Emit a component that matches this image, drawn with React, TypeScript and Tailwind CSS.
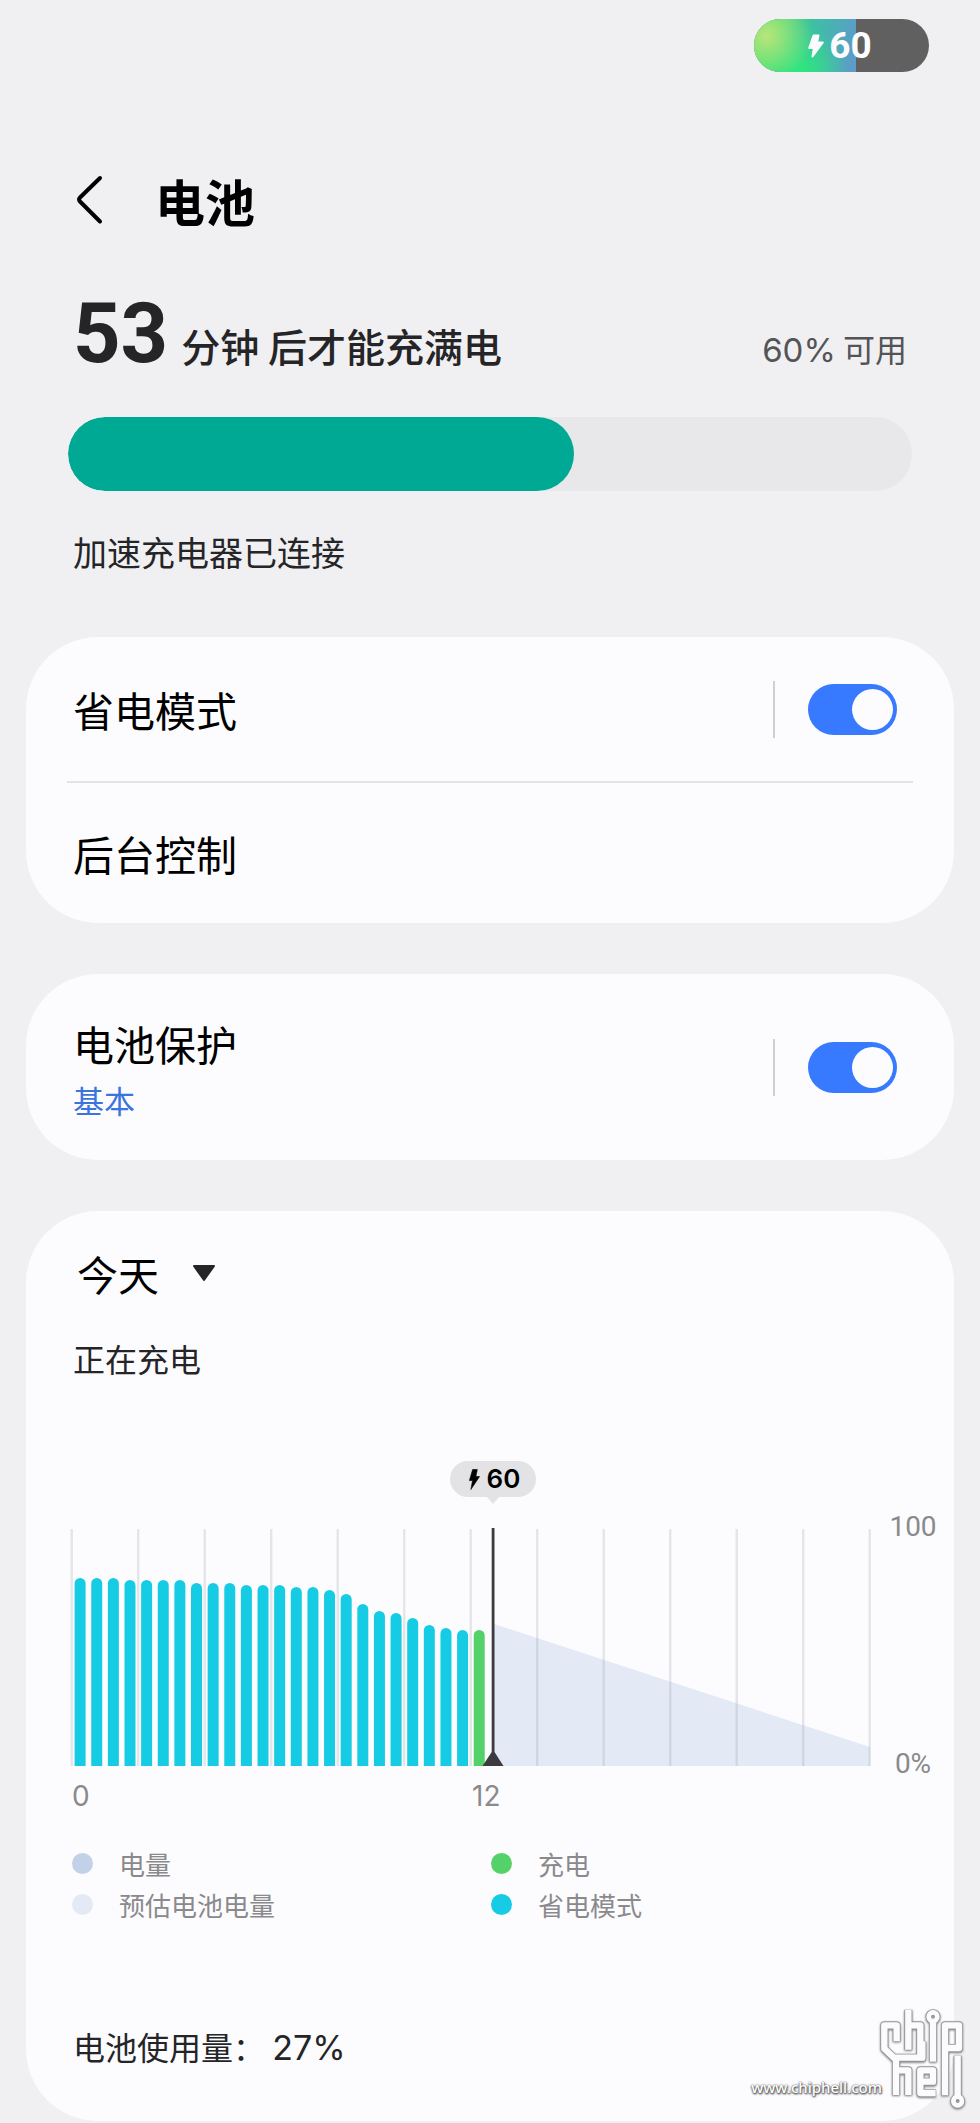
import { useState } from "react";

const cjk = "font-['Noto_Sans_CJK_SC',sans-serif]";
const latin = "font-['Inter',sans-serif]";

const barTops = [
  50, 50, 50, 52, 52, 52, 52, 55, 55, 55, 57, 57, 57, 59, 59, 62, 66, 76, 83,
  85, 90, 97, 100, 102, 102,
];

const legend = [
  { label: "电量", dot: "bg-[#c3d1e8]" },
  { label: "充电", dot: "bg-[#54d169]" },
  { label: "预估电池电量", dot: "bg-[#e3eaf5]" },
  { label: "省电模式", dot: "bg-[#16cce5]" },
];

function RoundBolt({ className }: { className: string }) {
  return (
    <svg viewBox="0 0 16 24" className={className} fill="currentColor" stroke="currentColor" strokeWidth="2" strokeLinejoin="round" aria-hidden="true">
      <path d="M5.500 1.500H10.500L9 8.500H14.800L4.500 22.500 6 14H1.200Z" />
    </svg>
  );
}

function SharpBolt({ className }: { className: string }) {
  return (
    <svg viewBox="0 0 11 21" className={className} fill="currentColor" stroke="currentColor" strokeWidth="0.6" strokeLinejoin="round" aria-hidden="true">
      <path d="M3.600 0.500H8.300L6.900 7.500H10.600L1.900 20.500 3.500 11.500H0.400Z" />
    </svg>
  );
}

function Toggle({ id, label }: { id: string; label: string }) {
  const [on, setOn] = useState(true);
  return (
    <div className="flex items-center gap-[33px]">
      <span className="h-[57px] w-[2px] bg-[#cfcfd2]" />
      <label htmlFor={id} className="relative block h-[51px] w-[89px] cursor-pointer">
        <input
          id={id}
          type="checkbox"
          role="switch"
          aria-label={label}
          checked={on}
          onChange={(e) => setOn(e.target.checked)}
          className="peer block h-full w-full appearance-none rounded-full bg-[#b9b9be] checked:bg-[#387aff]"
        />
        <span className="pointer-events-none absolute top-[5px] left-[5px] size-[41px] rounded-full bg-[#fcfcfe] peer-checked:left-[44px]" />
      </label>
    </div>
  );
}

function Chart() {
  return (
    <svg viewBox="0 0 802 239" className="block h-auto w-full" role="img" aria-label="电池电量图表">
      <path d="M424 96 800 219V238H424Z" fill="#e3eaf5" />
      {Array.from({ length: 13 }, (_, i) => (
        <rect key={i} x={0.5 + i * 66.5} y="1" width="2.4" height="237" fill="#8c8c96" fillOpacity="0.2" />
      ))}
      {barTops.map((top, i) => {
        const x = 4.6 + i * 16.63;
        return (
          <path
            key={i}
            d={`M${x} 238V${top + 5.5}a5.5 5.5 0 0 1 11 0V238Z`}
            fill={i === barTops.length - 1 ? "#54d169" : "#16cce5"}
          />
        );
      })}
      <path d="M421.7 0h2.8v224l9 14h-21l9.2-14Z" fill="#3c3c3e" />
    </svg>
  );
}

function Watermark() {
  return (
    <div className="pointer-events-none absolute right-[13px] bottom-[12px] flex items-end">
      <span className="-mr-[3px] mb-[13px] font-['Noto_Sans',sans-serif] text-[15px] leading-[22px] font-medium text-white [text-shadow:0_0_2px_#555,0_1px_2px_#555,1px_1px_2px_#666]">
        www.chiphell.com
      </span>
      <svg viewBox="482 80 264 312" className="h-[104px] w-[88px] drop-shadow-[0_1px_1px_#777]" fill="none" aria-hidden="true">
        {[
          { color: "#969696", width: 24 },
          { color: "#fbfbfd", width: 19 },
        ].map((s) => (
          <g key={s.color} stroke={s.color} strokeWidth={s.width} strokeLinejoin="round" strokeLinecap="butt">
            <path d="M535 183V135H498V205L533 238V344" />
            <path d="M528 232H612V183" />
            <path d="M570 88V208M570 135H606V240" />
            <path d="M644 120V244" />
            <path d="M680 345V135H722V203H680" />
            <path d="M533 270H570V344" />
            <path d="M652 338H606V270H644V304H610" />
            <path d="M718 226V350" />
            <circle cx="644" cy="109" r="13" strokeWidth={s.width - 5} />
            <circle cx="718" cy="362" r="13" strokeWidth={s.width - 5} />
          </g>
        ))}
      </svg>
    </div>
  );
}

export default function App() {
  return (
    <div lang="zh-CN" className={`relative min-h-screen bg-[#f0f0f2] text-black ${cjk}`}>
      <div className="flex justify-end pt-[19px] pr-[51px]">
        <div className="relative flex h-[53px] w-[175px] items-center justify-center overflow-hidden rounded-full bg-[#606060] pr-[3px] text-[#fcfcfe]">
          <span className="absolute inset-y-0 left-0 w-[102px] bg-[radial-gradient(circle_at_12%_32%,#b9e57c_0%,#b9e57c00_48%),radial-gradient(circle_at_45%_100%,#2ee87c_0%,#2ee87c00_62%),linear-gradient(100deg,#3fe070_20%,#3dbfa4_55%,#5c9cc8_95%)]" />
          <span className="relative flex items-center gap-[5px]">
            <RoundBolt className="h-[24px] w-[16px]" />
            <span className="font-['Roboto',sans-serif] text-[37px] leading-[44px] font-bold">60</span>
          </span>
        </div>
      </div>

      <header className="mt-[97px] flex h-[61px] items-center pl-[75px]">
        <button type="button" aria-label="返回" className="block">
          <svg viewBox="0 0 28 50" className="h-[50px] w-[28px]" fill="none" stroke="black" strokeWidth="4" strokeLinecap="round" strokeLinejoin="round">
            <path d="M25 3 5 22.5Q3 24.500 5 26.500L25 46.500" />
          </svg>
        </button>
        <h1 className="ml-[52px] text-[50px] leading-[60px] font-bold">电池</h1>
      </header>

      <section className="mt-[59px] px-[68px]">
        <div className="flex items-baseline justify-between px-[5px]">
          <p className="flex items-baseline gap-[13px] text-[#252527]">
            <span className="font-['Roboto',sans-serif] text-[83px] leading-[90px] font-bold">53</span>
            <span className="text-[39px] leading-[50px] font-medium">分钟 后才能充满电</span>
          </p>
          <p className="text-[32px] leading-[50px] text-[#545457]">
            <span className={`text-[33px] ${latin}`}>60%</span> 可用
          </p>
        </div>
        <div
          role="progressbar"
          aria-label="电池电量"
          aria-valuenow={60}
          className="mt-[38px] h-[74px] overflow-hidden rounded-full bg-[#e8e8ea]"
        >
          <div className="h-full w-3/5 rounded-full bg-[#00a994]" />
        </div>
        <p className="mt-[37px] px-[5px] text-[34px] leading-[48px] text-[#252527]">加速充电器已连接</p>
      </section>

      <main className="mt-[61px] flex flex-col gap-[51px] px-[26px]">
        <section className="rounded-[72px] bg-[#fcfcfe]">
          <div className="flex h-[144px] items-center justify-between pr-[57px] pl-[47px]">
            <h2 className="text-[41px] leading-[60px]">省电模式</h2>
            <Toggle id="saver" label="省电模式" />
          </div>
          <hr className="mx-[41px] h-[2px] border-0 bg-[#e3e3e5]" />
          <div className="flex h-[140px] items-center px-[47px]">
            <h2 className="text-[41px] leading-[60px]">后台控制</h2>
          </div>
        </section>

        <section className="flex h-[186px] items-center justify-between rounded-[72px] bg-[#fcfcfe] pr-[57px] pl-[47px]">
          <div className="pt-[3px]">
            <h2 className="text-[41px] leading-[60px]">电池保护</h2>
            <p className="mt-[2px] text-[31px] leading-[50px] text-[#3b74dd]">基本</p>
          </div>
          <Toggle id="protect" label="电池保护" />
        </section>

        <section className="rounded-[72px] bg-[#fcfcfe] px-[44px] pt-[32px] pb-[49px]">
          <div className="flex items-center pl-[7px]">
            <select aria-label="日期" className="w-[116px] appearance-none bg-transparent text-[41px] leading-[60px] outline-none">
              <option>今天</option>
            </select>
            <svg viewBox="0 0 22 16" className="h-[16px] w-[22px]" fill="#252527" stroke="#252527" strokeWidth="2" strokeLinejoin="round" aria-hidden="true">
              <path d="M1 1h20L11 15Z" />
            </svg>
          </div>
          <p className="mt-[31px] pl-[3px] text-[32px] leading-[48px] text-[#252527]">正在充电</p>

          <div className="mt-[79px] -mr-[44px] flex">
            <div className="flex-1">
              <div className="flex h-[67px] items-start pl-[380px]">
                <div className="relative flex h-[36px] w-[86px] items-center justify-center gap-[7px] rounded-full bg-[#e3e3e5] pl-[3px]">
                  <SharpBolt className="h-[21px] w-[11px]" />
                  <span className={`text-[26px] leading-[36px] font-semibold ${latin}`}>60</span>
                  <svg viewBox="0 0 14 8" className="absolute top-[35px] left-[36px] h-[8px] w-[14px]" fill="#e3e3e5" aria-hidden="true">
                    <path d="M0 0h14L7 8Z" />
                  </svg>
                </div>
              </div>
              <Chart />
              <div className={`mt-[11px] flex pl-[2px] text-[28px] leading-[36px] text-[#8a8a8c] ${latin}`}>
                <span className="w-1/2">0</span>
                <span>12</span>
              </div>
            </div>
            <div className="flex h-[321px] w-[82px] flex-col justify-between pt-[48px] text-center font-['Roboto',sans-serif] text-[28px] leading-[36px] text-[#8a8a8c]">
              <span>100</span>
              <span>0%</span>
            </div>
          </div>

          <ul className="mt-[29px] grid grid-cols-2 pl-[2px] text-[26px] leading-[41px] text-[#8a8a8c]">
            {legend.map((item) => (
              <li key={item.label} className="flex items-center gap-[26px]">
                <span className={`size-[21px] rounded-full ${item.dot}`} />
                {item.label}
              </li>
            ))}
          </ul>

          <p className="mt-[97px] pl-[3px] text-[32px] leading-[48px] text-[#252527]">
            电池使用量： <span className={`text-[34px] ${latin}`}>27%</span>
          </p>
        </section>
      </main>

      <Watermark />
    </div>
  );
}
